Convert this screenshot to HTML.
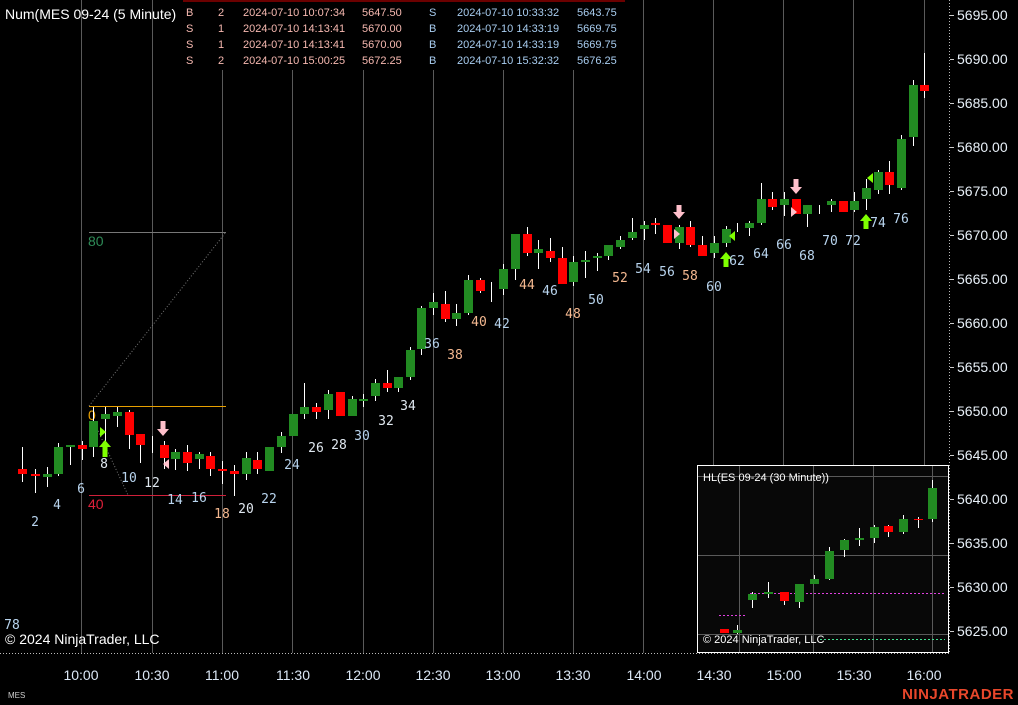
<!DOCTYPE html>
<html><head><meta charset="utf-8"><style>
html,body{margin:0;padding:0;background:#000;width:1018px;height:705px;overflow:hidden}
svg{display:block}
text{font-family:"Liberation Sans",sans-serif}
.m text{font-family:"DejaVu Sans Mono","Liberation Mono",monospace}
.g{fill:#228b22}.r{fill:#f00}
.w line{stroke:#fff;stroke-width:1}
</style></head><body>
<svg width="1018" height="705" viewBox="0 0 1018 705" xmlns="http://www.w3.org/2000/svg">
<rect width="1018" height="705" fill="#000"/>
<g stroke="#5a5a5a" stroke-width="1">
<line x1="81.5" y1="0" x2="81.5" y2="653"/><line x1="152.5" y1="0" x2="152.5" y2="653"/>
<line x1="222.5" y1="0" x2="222.5" y2="653"/><line x1="292.5" y1="0" x2="292.5" y2="653"/>
<line x1="363.5" y1="0" x2="363.5" y2="653"/><line x1="433.5" y1="0" x2="433.5" y2="653"/>
<line x1="503.5" y1="0" x2="503.5" y2="653"/><line x1="573.5" y1="0" x2="573.5" y2="653"/>
<line x1="643.5" y1="0" x2="643.5" y2="653"/><line x1="713.5" y1="0" x2="713.5" y2="465"/>
<line x1="783.5" y1="0" x2="783.5" y2="465"/><line x1="853.5" y1="0" x2="853.5" y2="465"/>
<line x1="924.5" y1="0" x2="924.5" y2="465"/>
</g>
<rect x="183" y="2" width="442" height="68" fill="#000"/>
<line x1="183" y1="1" x2="625" y2="1" stroke="#6b0000" stroke-width="2"/>
<g font-size="11" style="font-family:'Liberation Sans Narrow','Liberation Sans',sans-serif">
<g fill="#f6b8b0">
<text x="186" y="16">B</text><text x="218" y="16">2</text><text x="243" y="16">2024-07-10 10:07:34</text><text x="362" y="16">5647.50</text>
<text x="186" y="32">S</text><text x="218" y="32">1</text><text x="243" y="32">2024-07-10 14:13:41</text><text x="362" y="32">5670.00</text>
<text x="186" y="48">S</text><text x="218" y="48">1</text><text x="243" y="48">2024-07-10 14:13:41</text><text x="362" y="48">5670.00</text>
<text x="186" y="64">S</text><text x="218" y="64">2</text><text x="243" y="64">2024-07-10 15:00:25</text><text x="362" y="64">5672.25</text>
</g>
<g fill="#a8cdf0">
<text x="429" y="16">S</text><text x="457" y="16">2024-07-10 10:33:32</text><text x="577" y="16">5643.75</text>
<text x="429" y="32">B</text><text x="457" y="32">2024-07-10 14:33:19</text><text x="577" y="32">5669.75</text>
<text x="429" y="48">B</text><text x="457" y="48">2024-07-10 14:33:19</text><text x="577" y="48">5669.75</text>
<text x="429" y="64">B</text><text x="457" y="64">2024-07-10 15:32:32</text><text x="577" y="64">5676.25</text>
</g></g>
<text x="5" y="19" font-size="14" fill="#fff">Num(MES 09-24 (5 Minute)</text>
<line x1="89" y1="232.5" x2="226" y2="232.5" stroke="#777" stroke-width="1"/>
<line x1="89" y1="406.5" x2="226" y2="406.5" stroke="#e8a000" stroke-width="1"/>
<line x1="89" y1="495.5" x2="226" y2="495.5" stroke="#d0203a" stroke-width="1"/>
<line x1="89" y1="406" x2="226" y2="232" stroke="#777" stroke-dasharray="1,2"/>
<line x1="93" y1="420" x2="128" y2="495" stroke="#777" stroke-dasharray="1,2"/>
<text x="88" y="246" font-size="14" fill="#2e8b57">80</text>
<text x="88" y="420" font-size="14" fill="#e8a000">0</text>
<text x="88" y="509" font-size="14" fill="#e0203a">40</text>
<g class="w">
<line x1="22.5" y1="447" x2="22.5" y2="482"/><line x1="35.5" y1="469" x2="35.5" y2="493"/><line x1="47.5" y1="467" x2="47.5" y2="487"/><line x1="58.5" y1="443" x2="58.5" y2="476"/><line x1="70.5" y1="445" x2="70.5" y2="465"/><line x1="82.5" y1="441" x2="82.5" y2="460"/><line x1="93.5" y1="407" x2="93.5" y2="457"/><line x1="105.5" y1="407" x2="105.5" y2="444"/><line x1="117.5" y1="407" x2="117.5" y2="427"/><line x1="129.5" y1="410" x2="129.5" y2="449"/><line x1="140.5" y1="434" x2="140.5" y2="463"/><line x1="152.5" y1="436" x2="152.5" y2="453"/><line x1="164.5" y1="441" x2="164.5" y2="469"/><line x1="175.5" y1="449" x2="175.5" y2="470"/><line x1="187.5" y1="445" x2="187.5" y2="471"/><line x1="199.5" y1="452" x2="199.5" y2="469"/><line x1="210.5" y1="452" x2="210.5" y2="476"/><line x1="222.5" y1="461" x2="222.5" y2="484"/><line x1="234.5" y1="465" x2="234.5" y2="496"/><line x1="246.5" y1="452" x2="246.5" y2="480"/><line x1="257.5" y1="452" x2="257.5" y2="474"/><line x1="281.5" y1="432" x2="281.5" y2="453"/><line x1="304.5" y1="383" x2="304.5" y2="419"/><line x1="316.5" y1="403" x2="316.5" y2="419"/><line x1="328.5" y1="390" x2="328.5" y2="419"/><line x1="352.5" y1="396" x2="352.5" y2="416"/><line x1="363.5" y1="394" x2="363.5" y2="407"/><line x1="375.5" y1="379" x2="375.5" y2="401"/><line x1="387.5" y1="370" x2="387.5" y2="392"/><line x1="398.5" y1="377" x2="398.5" y2="392"/><line x1="410.5" y1="347" x2="410.5" y2="380"/><line x1="421.5" y1="306" x2="421.5" y2="355"/><line x1="433.5" y1="293" x2="433.5" y2="315"/><line x1="445.5" y1="291" x2="445.5" y2="322"/><line x1="456.5" y1="304" x2="456.5" y2="326"/><line x1="468.5" y1="275" x2="468.5" y2="315"/><line x1="480.5" y1="278" x2="480.5" y2="293"/><line x1="491.5" y1="282" x2="491.5" y2="302"/><line x1="503.5" y1="264" x2="503.5" y2="295"/><line x1="515.5" y1="234" x2="515.5" y2="280"/><line x1="527.5" y1="227" x2="527.5" y2="256"/><line x1="538.5" y1="240" x2="538.5" y2="269"/><line x1="550.5" y1="238" x2="550.5" y2="262"/><line x1="562.5" y1="247" x2="562.5" y2="284"/><line x1="573.5" y1="256" x2="573.5" y2="286"/><line x1="585.5" y1="251" x2="585.5" y2="278"/><line x1="597.5" y1="253" x2="597.5" y2="271"/><line x1="608.5" y1="245" x2="608.5" y2="260"/><line x1="620.5" y1="236" x2="620.5" y2="249"/><line x1="632.5" y1="218" x2="632.5" y2="240"/><line x1="644.5" y1="221" x2="644.5" y2="240"/><line x1="655.5" y1="218" x2="655.5" y2="234"/><line x1="679.5" y1="225" x2="679.5" y2="249"/><line x1="690.5" y1="221" x2="690.5" y2="247"/><line x1="702.5" y1="236" x2="702.5" y2="256"/><line x1="714.5" y1="236" x2="714.5" y2="258"/><line x1="726.5" y1="226" x2="726.5" y2="247"/><line x1="737.5" y1="223" x2="737.5" y2="232"/><line x1="749.5" y1="221" x2="749.5" y2="236"/><line x1="761.5" y1="183" x2="761.5" y2="225"/><line x1="772.5" y1="192" x2="772.5" y2="210"/><line x1="784.5" y1="192" x2="784.5" y2="216"/><line x1="807.5" y1="205" x2="807.5" y2="227"/><line x1="819.5" y1="205" x2="819.5" y2="214"/><line x1="831.5" y1="199" x2="831.5" y2="212"/><line x1="854.5" y1="192" x2="854.5" y2="212"/><line x1="866.5" y1="179" x2="866.5" y2="210"/><line x1="878.5" y1="170" x2="878.5" y2="194"/><line x1="889.5" y1="161" x2="889.5" y2="194"/><line x1="901.5" y1="135" x2="901.5" y2="190"/><line x1="913.5" y1="80" x2="913.5" y2="146"/><line x1="924.5" y1="53" x2="924.5" y2="98"/>
</g>
<g>
<rect class="r" x="18" y="469" width="9" height="5"/><rect class="r" x="31" y="474" width="9" height="2"/><rect class="g" x="43" y="474" width="9" height="3"/><rect class="g" x="54" y="447" width="9" height="27"/><rect class="g" x="66" y="445" width="9" height="2"/><rect class="r" x="78" y="445" width="9" height="4"/><rect class="g" x="89" y="421" width="9" height="26"/><rect class="g" x="101" y="414" width="9" height="5"/><rect class="g" x="113" y="412" width="9" height="4"/><rect class="r" x="125" y="412" width="9" height="23"/><rect class="r" x="136" y="434" width="9" height="11"/><rect class="r" x="160" y="445" width="9" height="13"/><rect class="g" x="171" y="452" width="9" height="7"/><rect class="r" x="183" y="452" width="9" height="11"/><rect class="g" x="195" y="454" width="9" height="5"/><rect class="r" x="206" y="456" width="9" height="13"/><rect class="r" x="218" y="469" width="9" height="2"/><rect class="r" x="230" y="471" width="9" height="3"/><rect class="g" x="242" y="458" width="9" height="16"/><rect class="r" x="253" y="460" width="9" height="9"/><rect class="g" x="265" y="447" width="9" height="24"/><rect class="g" x="277" y="436" width="9" height="11"/><rect class="g" x="289" y="414" width="9" height="22"/><rect class="g" x="300" y="407" width="9" height="7"/><rect class="r" x="312" y="407" width="9" height="5"/><rect class="g" x="324" y="394" width="9" height="16"/><rect class="r" x="336" y="392" width="9" height="24"/><rect class="g" x="348" y="399" width="9" height="17"/><rect class="g" x="359" y="399" width="9" height="2"/><rect class="g" x="371" y="383" width="9" height="13"/><rect class="r" x="383" y="383" width="9" height="5"/><rect class="g" x="394" y="377" width="9" height="11"/><rect class="g" x="406" y="350" width="9" height="27"/><rect class="g" x="417" y="308" width="9" height="41"/><rect class="g" x="429" y="302" width="9" height="6"/><rect class="r" x="441" y="304" width="9" height="15"/><rect class="g" x="452" y="313" width="9" height="6"/><rect class="g" x="464" y="280" width="9" height="33"/><rect class="r" x="476" y="280" width="9" height="11"/><rect class="g" x="499" y="269" width="9" height="20"/><rect class="g" x="511" y="234" width="9" height="35"/><rect class="r" x="523" y="234" width="9" height="19"/><rect class="g" x="534" y="249" width="9" height="4"/><rect class="r" x="546" y="251" width="9" height="7"/><rect class="r" x="558" y="258" width="9" height="26"/><rect class="g" x="569" y="262" width="9" height="20"/><rect class="g" x="581" y="260" width="9" height="2"/><rect class="g" x="593" y="256" width="9" height="2"/><rect class="g" x="604" y="245" width="9" height="11"/><rect class="g" x="616" y="240" width="9" height="7"/><rect class="g" x="628" y="232" width="9" height="6"/><rect class="g" x="640" y="225" width="9" height="4"/><rect class="r" x="651" y="223" width="9" height="2"/><rect class="r" x="663" y="225" width="9" height="18"/><rect class="g" x="675" y="227" width="9" height="16"/><rect class="r" x="686" y="227" width="9" height="18"/><rect class="r" x="698" y="245" width="9" height="11"/><rect class="g" x="710" y="243" width="9" height="10"/><rect class="g" x="722" y="229" width="9" height="14"/><rect class="g" x="745" y="223" width="9" height="5"/><rect class="g" x="757" y="199" width="9" height="24"/><rect class="r" x="768" y="199" width="9" height="8"/><rect class="g" x="780" y="199" width="9" height="6"/><rect class="r" x="792" y="199" width="9" height="15"/><rect class="g" x="803" y="205" width="9" height="9"/><rect class="g" x="827" y="201" width="9" height="4"/><rect class="r" x="839" y="201" width="9" height="11"/><rect class="g" x="850" y="201" width="9" height="9"/><rect class="g" x="862" y="188" width="9" height="11"/><rect class="g" x="874" y="172" width="9" height="18"/><rect class="r" x="885" y="172" width="9" height="13"/><rect class="g" x="897" y="139" width="9" height="49"/><rect class="g" x="909" y="85" width="9" height="52"/><rect class="r" x="920" y="85" width="9" height="6"/>
</g>
<g fill="#7fff00">
<path d="M105 440 L111 447 L107.5 447 L107.5 457 L102.5 457 L102.5 447 L99 447 Z"/>
<path d="M726 252 L732 259 L728.5 259 L728.5 267 L723.5 267 L723.5 259 L720 259 Z"/>
<path d="M866 214 L872 221 L868.5 221 L868.5 229 L863.5 229 L863.5 221 L860 221 Z"/>
<path d="M100 427 L106 432 L100 437 Z"/><path d="M735 231 L729 236 L735 241 Z"/><path d="M873 173 L867 178 L873 183 Z"/>
</g>
<g fill="#ffc0cb">
<path d="M163 436 L169 429 L165.5 429 L165.5 421 L160.5 421 L160.5 429 L157 429 Z"/>
<path d="M679 219 L685 212 L681.5 212 L681.5 205 L676.5 205 L676.5 212 L673 212 Z"/>
<path d="M796 194 L802 187 L798.5 187 L798.5 179 L793.5 179 L793.5 187 L790 187 Z"/>
<path d="M169 459 L163 464 L169 469 Z"/><path d="M674 229 L680 234 L674 239 Z"/><path d="M791 207 L797 212 L791 217 Z"/>
</g>
<g class="m" font-size="13" text-anchor="middle" fill="#b8d4ee">
<text x="35" y="526">2</text><text x="57" y="509">4</text><text x="81" y="493">6</text><text x="104" y="468" fill="#e0e8f0">8</text><text x="129" y="482">10</text><text x="152" y="487" fill="#e0e8f0">12</text><text x="175" y="504">14</text><text x="199" y="502">16</text><text x="222" y="518" fill="#f4b890">18</text><text x="246" y="513" fill="#e0e8f0">20</text><text x="269" y="503">22</text><text x="292" y="469">24</text><text x="316" y="452" fill="#e0e8f0">26</text><text x="339" y="449" fill="#e0e8f0">28</text><text x="362" y="440">30</text><text x="386" y="425" fill="#e0e8f0">32</text><text x="408" y="410" fill="#e0e8f0">34</text><text x="432" y="348">36</text><text x="455" y="359" fill="#f4b890">38</text><text x="479" y="326" fill="#f4b890">40</text><text x="502" y="328">42</text><text x="527" y="289" fill="#f4b890">44</text><text x="550" y="295">46</text><text x="573" y="318" fill="#f4b890">48</text><text x="596" y="304">50</text><text x="620" y="282" fill="#f4b890">52</text><text x="643" y="273">54</text><text x="667" y="276">56</text><text x="690" y="280" fill="#f4b890">58</text><text x="714" y="291">60</text><text x="737" y="265">62</text><text x="761" y="258">64</text><text x="784" y="249">66</text><text x="807" y="260">68</text><text x="830" y="245">70</text><text x="853" y="245">72</text><text x="878" y="227">74</text><text x="901" y="223">76</text>
<text x="12" y="629">78</text>
</g>
<text x="5" y="644" font-size="14" fill="#fff">© 2024 NinjaTrader, LLC</text>
<rect x="697.5" y="465.5" width="251" height="187" fill="#080808" stroke="#fff" stroke-width="1"/>
<g stroke="#5a5a5a"><line x1="698" y1="476.5" x2="948" y2="476.5"/><line x1="698" y1="555.5" x2="948" y2="555.5"/><line x1="698" y1="634.5" x2="948" y2="634.5"/>
<line x1="739.5" y1="466" x2="739.5" y2="652"/><line x1="813.5" y1="466" x2="813.5" y2="652"/><line x1="873.5" y1="466" x2="873.5" y2="652"/><line x1="932.5" y1="466" x2="932.5" y2="652"/></g>
<g stroke="#e040e0" stroke-dasharray="2,2"><line x1="750" y1="593.5" x2="945" y2="593.5"/><line x1="719" y1="615.5" x2="745" y2="615.5"/></g>
<line x1="820" y1="639.5" x2="945" y2="639.5" stroke="#40e090" stroke-dasharray="2,2"/>
<g class="w"><line x1="737.5" y1="625" x2="737.5" y2="634"/><line x1="752.5" y1="592" x2="752.5" y2="608"/><line x1="768.5" y1="582" x2="768.5" y2="598"/><line x1="784.5" y1="592" x2="784.5" y2="605"/><line x1="799.5" y1="584" x2="799.5" y2="608"/><line x1="814.5" y1="575" x2="814.5" y2="584"/><line x1="829.5" y1="547" x2="829.5" y2="580"/><line x1="844.5" y1="539" x2="844.5" y2="557"/><line x1="859.5" y1="528" x2="859.5" y2="546"/><line x1="874.5" y1="525" x2="874.5" y2="543"/><line x1="888.5" y1="525" x2="888.5" y2="537"/><line x1="903.5" y1="515" x2="903.5" y2="534"/><line x1="918.5" y1="517" x2="918.5" y2="528"/><line x1="932.5" y1="480" x2="932.5" y2="522"/></g>
<rect class="r" x="720" y="629" width="9" height="4"/><rect class="g" x="733" y="630" width="9" height="3"/><rect class="g" x="748" y="594" width="9" height="6"/><rect class="g" x="764" y="592" width="9" height="2"/><rect class="r" x="780" y="592" width="9" height="9"/><rect class="g" x="795" y="584" width="9" height="18"/><rect class="g" x="810" y="579" width="9" height="5"/><rect class="g" x="825" y="551" width="9" height="28"/><rect class="g" x="840" y="540" width="9" height="10"/><rect class="g" x="855" y="538" width="9" height="2"/><rect class="g" x="870" y="527" width="9" height="11"/><rect class="r" x="884" y="526" width="9" height="6"/><rect class="g" x="899" y="519" width="9" height="13"/><rect class="r" x="914" y="519" width="9" height="1"/><rect class="g" x="928" y="488" width="9" height="31"/>
<text x="703" y="481" font-size="11" fill="#fff">HL(ES 09-24 (30 Minute))</text>
<text x="703" y="643" font-size="11" fill="#fff">© 2024 NinjaTrader, LLC</text>
<line x1="949.5" y1="0" x2="949.5" y2="653" stroke="#bbb" stroke-dasharray="1,2"/>
<line x1="0" y1="653.5" x2="950" y2="653.5" stroke="#bbb" stroke-dasharray="1,2"/>
<g stroke="#ccc"><line x1="950" y1="15.5" x2="954" y2="15.5"/><line x1="950" y1="59.5" x2="954" y2="59.5"/><line x1="950" y1="103.5" x2="954" y2="103.5"/><line x1="950" y1="147.5" x2="954" y2="147.5"/><line x1="950" y1="191.5" x2="954" y2="191.5"/><line x1="950" y1="235.5" x2="954" y2="235.5"/><line x1="950" y1="279.5" x2="954" y2="279.5"/><line x1="950" y1="323.5" x2="954" y2="323.5"/><line x1="950" y1="367.5" x2="954" y2="367.5"/><line x1="950" y1="411.5" x2="954" y2="411.5"/><line x1="950" y1="455.5" x2="954" y2="455.5"/><line x1="950" y1="499.5" x2="954" y2="499.5"/><line x1="950" y1="543.5" x2="954" y2="543.5"/><line x1="950" y1="587.5" x2="954" y2="587.5"/><line x1="950" y1="631.5" x2="954" y2="631.5"/></g>
<g font-size="14" fill="#e8f0f8">
<text x="957" y="20">5695.00</text><text x="957" y="64">5690.00</text><text x="957" y="108">5685.00</text><text x="957" y="152">5680.00</text><text x="957" y="196">5675.00</text><text x="957" y="240">5670.00</text><text x="957" y="284">5665.00</text><text x="957" y="328">5660.00</text><text x="957" y="372">5655.00</text><text x="957" y="416">5650.00</text><text x="957" y="460">5645.00</text><text x="957" y="504">5640.00</text><text x="957" y="548">5635.00</text><text x="957" y="592">5630.00</text><text x="957" y="636">5625.00</text>
</g>
<g font-size="14" fill="#dce8f6" text-anchor="middle">
<text x="81" y="680">10:00</text><text x="152" y="680">10:30</text><text x="222" y="680">11:00</text><text x="293" y="680">11:30</text><text x="363" y="680">12:00</text><text x="433" y="680">12:30</text><text x="503" y="680">13:00</text><text x="573" y="680">13:30</text><text x="644" y="680">14:00</text><text x="714" y="680">14:30</text><text x="784" y="680">15:00</text><text x="854" y="680">15:30</text><text x="924" y="680">16:00</text>
</g>
<text x="8" y="698" font-size="8" fill="#ccc">MES</text>
<text x="1014" y="699" font-size="15" font-weight="bold" fill="#e8472b" text-anchor="end" letter-spacing="0.5">NINJATRADER</text>
</svg>
</body></html>
